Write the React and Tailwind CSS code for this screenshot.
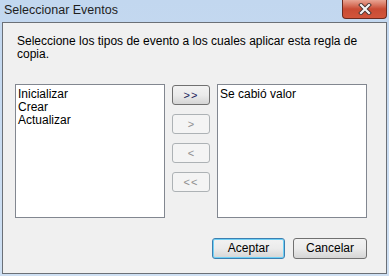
export default function App() {
  const font = { fontFamily: '"Liberation Sans", Arial, sans-serif' };
  const enabledBtn =
    "border border-[#707070] rounded-[3px] bg-gradient-to-b from-[#f2f2f2] via-[#ebebeb] to-[#d5d5d5] text-[#000]";
  const disabledBtn =
    "border border-[#adb2b5] rounded-[3px] bg-[#f4f4f4] text-[#8f8f8f]";

  return (
    <div
      className="w-[389px] h-[276px] bg-gradient-to-b from-[#c2d7ef] to-[#cfe0f3] flex flex-col text-[12px] leading-[13px]"
      style={font}
    >
      {/* title bar */}
      <div className="h-[22px] flex items-start justify-between">
        <div className="pl-[4px] pt-[4px] text-[#1e1e1e] text-[12.5px]">Seleccionar Eventos</div>
        <div className="mr-[2px] w-[45px] h-[19px] rounded-b-[4px] border border-t-0 border-[#6b2a1f] bg-gradient-to-b from-[#e8a493] via-[#c94b34] to-[#d2553b] flex items-center justify-center">
          <svg width="14" height="12" viewBox="0 0 14 12">
            <path d="M3 2 L11 10 M11 2 L3 10" stroke="#4a3430" strokeWidth="4" strokeLinecap="square" />
            <path d="M3 2 L11 10 M11 2 L3 10" stroke="#f4f4f4" strokeWidth="2.2" strokeLinecap="square" />
          </svg>
        </div>
      </div>

      {/* client area */}
      <div className="mx-[2px] h-[252px] border border-[#6b7077] bg-[#f0f0f0] flex flex-col">
        <p className="pl-[14px] pr-[20px] pt-[12px] text-[#000] leading-[13px]">
          Seleccione los tipos de evento a los cuales aplicar esta regla de copia.
        </p>

        <div className="mt-[23px] pl-[12px] flex gap-[7px]">
          <div className="w-[150px] h-[134px] bg-white border border-[#828790] pl-[2px] pt-[3px] text-black">
            <div>Inicializar</div>
            <div>Crear</div>
            <div>Actualizar</div>
          </div>

          <div className="w-[38px] pt-[1px] flex flex-col gap-[9px]">
            <button className={`h-[20px] ${enabledBtn} text-[11px] tracking-[1px]`}>
              <span className="text-[#1a1a5a]">&gt;&gt;</span>
            </button>
            <button className={`h-[20px] ${disabledBtn} text-[11px]`}>&gt;</button>
            <button className={`h-[20px] ${disabledBtn} text-[11px]`}>&lt;</button>
            <button className={`h-[20px] ${disabledBtn} text-[11px] tracking-[1px]`}>&lt;&lt;</button>
          </div>

          <div className="w-[150px] h-[134px] bg-white border border-[#828790] pl-[2px] pt-[3px] text-black">
            <div>Se cabió valor</div>
          </div>
        </div>

        <div className="mt-[20px] pr-[19px] flex justify-end gap-[8px]">
          <button className="w-[73px] h-[21px] rounded-[3px] border border-[#3c7fb1] bg-gradient-to-b from-[#f2f2f2] via-[#ebebeb] to-[#d5d5d5] shadow-[inset_0_0_0_1px_#6fd0f5] text-black">
            Aceptar
          </button>
          <button className={`w-[74px] h-[21px] ${enabledBtn}`}>Cancelar</button>
        </div>
      </div>
    </div>
  );
}
